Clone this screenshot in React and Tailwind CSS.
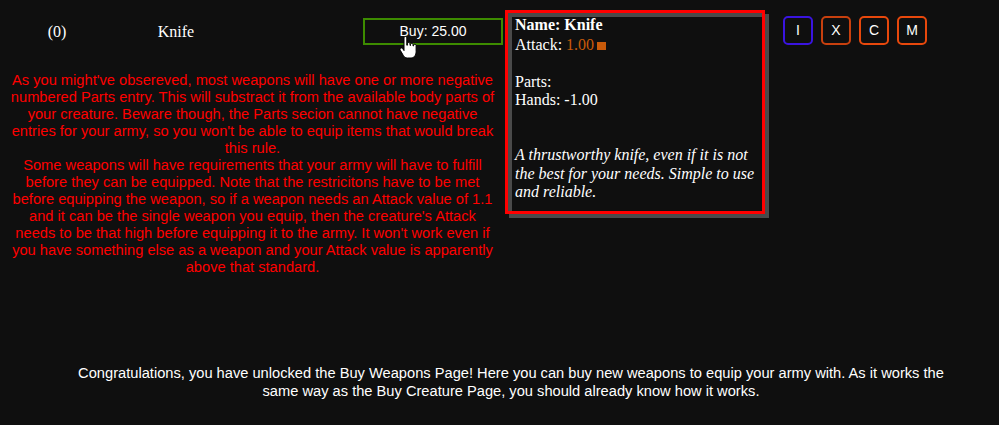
import React from 'react';

const serif = { fontFamily: '"Liberation Serif", "Times New Roman", serif' };

const HandCursor = () => (
  <svg width="18" height="24" viewBox="0 0 18 24" className="absolute left-[36px] top-[18px] pointer-events-none">
    <path
      d="M5 2c0-.9.6-1.5 1.4-1.5S7.8 1.1 7.8 2v7.2h.6V7.8c0-.8.6-1.3 1.3-1.3s1.3.5 1.3 1.3v1.6h.5V8.6c0-.8.6-1.3 1.3-1.3s1.2.5 1.2 1.3v1.3h.6v-.5c0-.7.6-1.2 1.2-1.2s1.3.5 1.3 1.2v6.3c0 3.3-1.9 6.3-5.1 6.3H8.3c-1.8 0-2.9-.8-3.8-2.2L1.3 14.3c-.5-.8-.3-1.7.4-2.1.7-.4 1.5-.2 2 .5L5 14.6z"
      fill="#fff"
      stroke="#000"
      strokeWidth="1"
      strokeLinejoin="round"
    />
  </svg>
);

const Tooltip = () => (
  <div
    className="absolute left-[142px] top-[-8px] w-[260px] h-[204px] border-[3px] border-[#ff0000] bg-[#0f0f0f] pl-[7px] pr-[5px] pt-[3px] text-[16px] leading-[18.4px] text-white shadow-[4px_4px_0_#4a4a4a,inset_4px_4px_0_#4a4a4a]"
    style={serif}
  >
    <div className="font-bold">Name: Knife</div>
    <div className="mt-[1.5px]">
      Attack: <span className="text-[#c85a0a]">1.00</span>
      <span className="inline-block w-[9px] h-[8px] bg-[#c85a0a] ml-[3px]" />
    </div>
    <div className="h-[18.4px]" />
    <div>Parts:</div>
    <div>Hands: -1.00</div>
    <div className="h-[36.8px]" />
    <div className="italic">
      A thrustworthy knife, even if it is not the best for your needs. Simple to use and reliable.
    </div>
  </div>
);

const SideButton = ({ label, border }) => (
  <button
    className={`w-[30px] h-[29px] rounded-[5px] border-2 ${border} text-white text-[14px] flex items-center justify-center`}
    style={{ fontFamily: '"Liberation Sans", Arial, sans-serif' }}
  >
    {label}
  </button>
);

export default function App() {
  return (
    <div className="min-h-screen bg-[#0f0f0f] text-white" style={{ fontFamily: '"Liberation Sans", Arial, sans-serif' }}>
      <div className="flex pt-[16px]">
        <div className="w-[505px] shrink-0 pt-[2px]">
          {/* item row */}
          <div className="flex items-center h-[27px]">
            <div className="w-[114px] text-center text-[16px]" style={serif}>(0)</div>
            <div className="w-[124px] text-center text-[16px]" style={serif}>Knife</div>
            <div className="w-[125px]" />
            <div className="relative">
              <button className="w-[140px] h-[27px] border-2 border-[#3d8c00] text-white text-[14px]">
                Buy: 25.00
              </button>
              <HandCursor />
              <Tooltip />
            </div>
          </div>

          <p className="mt-[27px] px-[8px] text-center text-[14.67px] leading-[17px] text-[#ff0000]">
            As you might've obsereved, most weapons will have one or more negative numbered Parts entry. This will
            substract it from the available body parts of your creature. Beware though, the Parts secion cannot have
            negative entries for your army, so you won't be able to equip items that would break this rule.
            <br />
            Some weapons will have requirements that your army will have to fulfill before they can be equipped. Note
            that the restricitons have to be met before equipping the weapon, so if a weapon needs an Attack value of
            1.1 and it can be the single weapon you equip, then the creature's Attack needs to be that high before
            equipping it to the army. It won't work even if you have something else as a weapon and your Attack value
            is apparently above that standard.
          </p>
        </div>

        <div className="ml-[278px] flex gap-[8px]">
          <SideButton label="I" border="border-[#3a14e0]" />
          <SideButton label="X" border="border-[#c8400e]" />
          <SideButton label="C" border="border-[#e8480c]" />
          <SideButton label="M" border="border-[#e8480c]" />
        </div>
      </div>

      <p className="ml-[66px] w-[890px] mt-[89px] text-center text-[14.67px] leading-[17.5px]">
        Congratulations, you have unlocked the Buy Weapons Page! Here you can buy new weapons to equip your army with.
        As it works the same way as the Buy Creature Page, you should already know how it works.
      </p>
    </div>
  );
}
